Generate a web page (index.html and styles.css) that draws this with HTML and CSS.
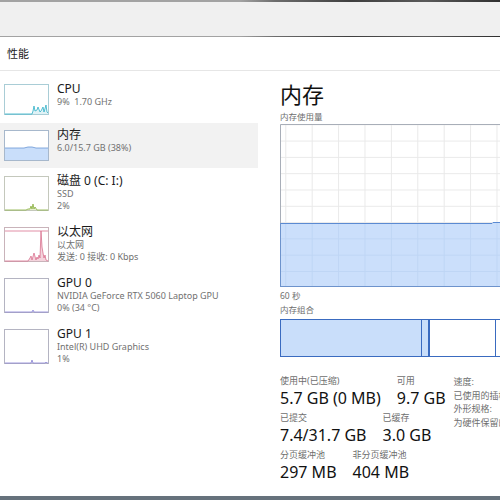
FILE: index.html
```html
<!DOCTYPE html>
<html lang="zh-CN">
<head>
<meta charset="utf-8">
<link rel="stylesheet" href="styles.css">
</head>
<body>
<div class="topbar"></div>
<div class="header">性能</div>
<div class="main">
  <aside class="sidebar">
    <div class="item two">
      <svg class="thumb" viewBox="0 0 45 31" preserveAspectRatio="none">
        <rect x="0.5" y="0.5" width="44" height="30" fill="#fff" stroke="#a9cdd6"/>
        <polygon points="1,30 28,30 29,27 30,22 31,27 33,26 34,23 36,28 37,27 39,23 40,28 42,21 43,28 44,29 44,30" fill="#dff2f6"/>
        <polyline points="1,30 28,30 29,27 30,22 31,27 33,26 34,23 36,28 37,27 39,23 40,28 42,21 43,28 44,29" fill="none" stroke="#2fb0c8" stroke-width="0.8"/>
      </svg>
      <div class="info">
        <div class="title">CPU</div>
        <div class="sub">9%&nbsp; 1.70 GHz</div>
      </div>
    </div>
    <div class="item two selected">
      <svg class="thumb" viewBox="0 0 45 31" preserveAspectRatio="none">
        <rect x="0.5" y="0.5" width="44" height="30" fill="#fff" stroke="#a7b8cc"/>
        <polygon points="1,18 20,18 24,17 28,17 32,18 44,18 44,30 1,30" fill="#c9defa"/>
        <polyline points="1,18 20,18 24,17 28,17 32,18 44,18" fill="none" stroke="#6a97d6" stroke-width="0.8"/>
      </svg>
      <div class="info">
        <div class="title">内存</div>
        <div class="sub">6.0/15.7 GB (38%)</div>
      </div>
    </div>
    <div class="item three">
      <svg class="thumb" viewBox="0 0 45 35" preserveAspectRatio="none">
        <rect x="0.5" y="0.5" width="44" height="34" fill="#fff" stroke="#c4c8bc"/>
        <polyline points="1,34 22,34 24,33 26,33 27,30 28,33 29,28 30,33 31,31 33,34 44,34" fill="#e6efcf" stroke="#86ad3c" stroke-width="0.8"/>
      </svg>
      <div class="info">
        <div class="title">磁盘 0 (C: I:)</div>
        <div class="sub">SSD</div>
        <div class="sub">2%</div>
      </div>
    </div>
    <div class="item three">
      <svg class="thumb" viewBox="0 0 45 35" preserveAspectRatio="none">
        <rect x="0.5" y="0.5" width="44" height="34" fill="#fff" stroke="#c9b3ba"/>
        <line x1="1" y1="4" x2="44" y2="4" stroke="#d9718f" stroke-width="0.8"/>
        <polyline points="1,34 24,34 26,31 27,29 28,33 30,26 32,33 33,30 34,32 35,28 36,31 37,4 38,20 39,26 40,31 41,28 42,33 44,34" fill="#f4d3dc" stroke="#d9718f" stroke-width="0.8"/>
      </svg>
      <div class="info">
        <div class="title">以太网</div>
        <div class="sub">以太网</div>
        <div class="sub">发送: 0 接收: 0 Kbps</div>
      </div>
    </div>
    <div class="item three">
      <svg class="thumb" viewBox="0 0 45 35" preserveAspectRatio="none">
        <rect x="0.5" y="0.5" width="44" height="34" fill="#fff" stroke="#b4b4c2"/>
        <polyline points="1,34 28,34 29,32 30,34 44,34" fill="#dcdaf3" stroke="#8a84d6" stroke-width="0.8"/>
      </svg>
      <div class="info">
        <div class="title">GPU 0</div>
        <div class="sub">NVIDIA GeForce RTX 5060 Laptop GPU</div>
        <div class="sub">0% (34 °C)</div>
      </div>
    </div>
    <div class="item three">
      <svg class="thumb" viewBox="0 0 45 35" preserveAspectRatio="none">
        <rect x="0.5" y="0.5" width="44" height="34" fill="#fff" stroke="#b4b4c2"/>
        <polyline points="1,34 27,34 28,31 29,34 41,34 42,33 43,34 44,34" fill="#dcdaf3" stroke="#8a84d6" stroke-width="0.8"/>
      </svg>
      <div class="info">
        <div class="title">GPU 1</div>
        <div class="sub">Intel(R) UHD Graphics</div>
        <div class="sub">1%</div>
      </div>
    </div>
  </aside>
  <section class="detail">
    <h1 class="big">内存</h1>
    <div class="label">内存使用量</div>
    <svg class="chart" width="262" height="163" viewBox="0 0 262 163">
      <defs>
        <pattern id="grid" x="5.3" y="0.3" width="26.4" height="16.3" patternUnits="userSpaceOnUse">
          <path d="M0.5 0 V16.3 M0 0.5 H26.4" fill="none" stroke="#e9e9e9" stroke-width="1"/>
        </pattern>
        <pattern id="gridf" x="5.3" y="0.3" width="26.4" height="16.3" patternUnits="userSpaceOnUse">
          <path d="M0.5 0 V16.3 M0 0.5 H26.4" fill="none" stroke="#b6cff0" stroke-width="1"/>
        </pattern>
      </defs>
      <rect x="0" y="0" width="262" height="163" fill="#fff"/>
      <rect x="0" y="0" width="262" height="163" fill="url(#grid)"/>
      <polygon points="0.5,99.5 212,99.5 213,98.5 262,98.5 262,162.5 0.5,162.5" fill="#cbdffb"/>
      <polygon points="0.5,99.5 212,99.5 213,98.5 262,98.5 262,162.5 0.5,162.5" fill="url(#gridf)" opacity="0.6"/>
      <polyline points="0.5,99.5 212,99.5 213,98.5 262,98.5" fill="none" stroke="#5b8ad2" stroke-width="1"/>
      <path d="M0.5 163 V0.5 H262" fill="none" stroke="#a8aeb8" stroke-width="1"/>
      <path d="M0.5 99 V163 M0 162.5 H262" fill="none" stroke="#6d93cc" stroke-width="1"/>
    </svg>
    <div class="label axis">60 秒</div>
    <div class="label">内存组合</div>
    <div class="compbar">
      <div class="seg inuse"></div>
      <div class="seg modified"></div>
      <div class="seg standby"></div>
      <div class="seg free"></div>
    </div>
    <div class="stats">
      <div class="statcols">
        <div class="row">
          <div class="stat"><div class="slabel">使用中(已压缩)</div><div class="value">5.7 GB (0 MB)</div></div>
          <div class="stat"><div class="slabel">可用</div><div class="value">9.7 GB</div></div>
        </div>
        <div class="row">
          <div class="stat"><div class="slabel">已提交</div><div class="value">7.4/31.7 GB</div></div>
          <div class="stat"><div class="slabel">已缓存</div><div class="value">3.0 GB</div></div>
        </div>
        <div class="row">
          <div class="stat"><div class="slabel">分页缓冲池</div><div class="value">297 MB</div></div>
          <div class="stat"><div class="slabel">非分页缓冲池</div><div class="value">404 MB</div></div>
        </div>
      </div>
      <div class="props">
        <div>速度:</div>
        <div>已使用的插槽:</div>
        <div>外形规格:</div>
        <div>为硬件保留的内存:</div>
      </div>
    </div>
  </section>
</div>
<div class="bottombar"></div>
</body>
</html>
```
FILE: styles.css
```css
html, body {
  margin: 0;
  padding: 0;
}
body {
  width: 500px;
  height: 500px;
  overflow: hidden;
  position: relative;
  background: #ffffff;
  font-family: "Noto Sans", "Noto Sans CJK SC", sans-serif;
  color: #1b1b1b;
}
.topbar {
  height: 34px;
  background: #f0f0f0;
  border-top: 2px solid #9c9c9c;
  border-image: linear-gradient(to right, #a3a3a3 0%, #a3a3a3 48%, #6d6d6d 55%, #3f3f3f 70%, #5a5a5a 85%, #2f2f2f 100%) 1;
  border-bottom: 1px solid #e4e4e4;
}
.header {
  height: 33px;
  line-height: 33px;
  padding-left: 7px;
  font-size: 11px;
  border-bottom: 1px solid #e6e6e6;
}
.main {
  display: flex;
  height: 425px;
}
.sidebar {
  width: 258px;
  flex: none;
  padding-top: 6px;
  display: flex;
  flex-direction: column;
  gap: 1px;
}
.item {
  display: flex;
  align-items: flex-start;
  gap: 8px;
  padding: 7px 4px 0;
  box-sizing: border-box;
}
.item.two { height: 45px; }
.item.three { height: 50px; }
.item.selected { background: #f2f2f2; }
.thumb {
  width: 45px;
  flex: none;
  display: block;
}
.item.two .thumb { height: 31px; }
.item.three .thumb { height: 35px; }
.info {
  margin-top: -3px;
}
.title {
  font-size: 12px;
  line-height: 15px;
  color: #1b1b1b;
}
.sub {
  font-size: 9px;
  line-height: 12px;
  color: #717171;
  white-space: nowrap;
}
.detail {
  margin-left: 22px;
  padding-top: 9px;
  flex: 1;
  min-width: 0;
}
.big {
  margin: 0;
  font-size: 22px;
  font-weight: normal;
  line-height: 28px;
  color: #111;
}
.label {
  font-size: 8.5px;
  line-height: 11px;
  color: #6e6e6e;
  margin-top: 3px;
}
.chart {
  display: block;
  margin-top: 2px;
}
.axis {
  margin-top: 3px;
}
.compbar {
  margin-top: 4px;
  height: 38px;
  display: flex;
  width: 262px;
  box-sizing: border-box;
  border: 1px solid #3a6bc0;
}
.seg {
  height: 100%;
  box-sizing: border-box;
  flex: none;
}
.inuse { width: 141px; background: #c9defa; border-right: 1px solid #3a6bc0; }
.modified { width: 8px; background: #c9defa; border-right: 2px solid #3a6bc0; }
.standby { width: 66px; background: #ffffff; border-right: 1px solid #3a6bc0; }
.free { flex: 1; background: #ffffff; }
.stats {
  margin-top: 18px;
  display: flex;
  gap: 8px;
}
.statcols {
  display: flex;
  flex-direction: column;
  gap: 3px;
}
.row {
  display: flex;
  gap: 16px;
}
.slabel {
  font-size: 9px;
  line-height: 12px;
  color: #6e6e6e;
}
.value {
  font-size: 16px;
  line-height: 22px;
  color: #111;
  white-space: nowrap;
}
.props {
  font-size: 9px;
  line-height: 13.5px;
  color: #6e6e6e;
  white-space: nowrap;
}
.bottombar {
  position: absolute;
  left: 0;
  right: 0;
  bottom: 0;
  height: 4px;
  background: #66727c;
}
```
